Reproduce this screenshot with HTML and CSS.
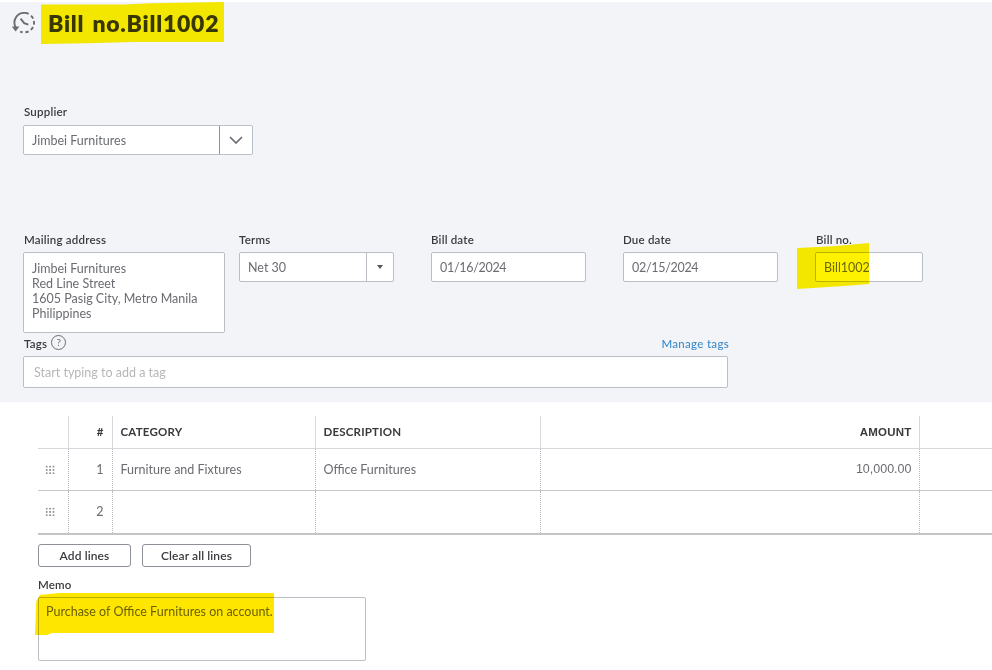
FILE: index.html
```html
<!DOCTYPE html>
<html lang="en">
<head>
    <meta charset="UTF-8">
    <meta name="viewport" content="width=device-width, initial-scale=1.0">
    <title>Bill no.Bill1002</title>
    <link rel="stylesheet" href="styles.css">
</head>
<body>
    <div class="page">
        <div class="panel">
            <div class="title-row">
                <svg class="history-icon" width="26" height="22" viewBox="0 0 26 22" fill="none" stroke="#6b6c72" stroke-width="1.9">
                    <path d="M4.6 15.2A9.7 9.7 0 0 1 13.4 0.9a9.7 9.7 0 0 1 4.3 1"/>
                    <path d="M20 3.6a9.7 9.7 0 0 1 2.1 3M22.9 9a9.7 9.7 0 0 1 0 3.6M22 15a9.7 9.7 0 0 1-2.2 2.9M17.6 19.3a9.7 9.7 0 0 1-3.2 1M11.6 20.3a9.7 9.7 0 0 1-2.4-.6"/>
                    <path d="M9.6 6.6l3.6 4.6 4.2 1.5"/>
                    <path d="M0.8 14.4h7.6l-3.8 5z" fill="#6b6c72" stroke="none"/>
                </svg>
                <h1>Bill no.Bill1002</h1>
            </div>

            <div class="field supplier">
                <label>Supplier</label>
                <div class="select">
                    <span class="value">Jimbei Furnitures</span>
                    <span class="select-btn">
                        <svg width="14" height="8" viewBox="0 0 14 8" fill="none" stroke="#6b6c72" stroke-width="1.7"><path d="M1 1l6 6 6-6"/></svg>
                    </span>
                </div>
            </div>

            <div class="details">
                <div class="field address">
                    <label>Mailing address</label>
                    <div class="box textarea">Jimbei Furnitures<br>Red Line Street<br>1605 Pasig City, Metro Manila<br>Philippines</div>
                </div>
                <div class="field terms">
                    <label>Terms</label>
                    <div class="select">
                        <span class="value">Net 30</span>
                        <span class="select-btn small"><i class="caret"></i></span>
                    </div>
                </div>
                <div class="field date">
                    <label>Bill date</label>
                    <div class="box input digits">01/16/2024</div>
                </div>
                <div class="field date">
                    <label>Due date</label>
                    <div class="box input digits">02/15/2024</div>
                </div>
                <div class="field bill-no">
                    <label>Bill no.</label>
                    <div class="box input">Bill1002</div>
                </div>
            </div>

            <div class="tags">
                <div class="tags-head">
                    <label>Tags</label>
                    <span class="help">?</span>
                    <a class="manage" href="#">Manage tags</a>
                </div>
                <div class="box tag-input">Start typing to add a tag</div>
            </div>
        </div>

        <div class="lines">
            <table>
                <colgroup>
                    <col class="c-drag"><col class="c-num"><col class="c-cat"><col class="c-desc"><col class="c-amt"><col>
                </colgroup>
                <thead>
                    <tr>
                        <th></th>
                        <th class="right">#</th>
                        <th>CATEGORY</th>
                        <th>DESCRIPTION</th>
                        <th class="right amount-head">AMOUNT</th>
                        <th></th>
                    </tr>
                </thead>
                <tbody>
                    <tr>
                        <td><span class="grip"></span></td>
                        <td class="right">1</td>
                        <td>Furniture and Fixtures</td>
                        <td>Office Furnitures</td>
                        <td class="right amount">10,000.00</td>
                        <td></td>
                    </tr>
                    <tr>
                        <td><span class="grip"></span></td>
                        <td class="right">2</td>
                        <td></td>
                        <td></td>
                        <td></td>
                        <td></td>
                    </tr>
                </tbody>
            </table>

            <div class="buttons">
                <button class="add">Add lines</button>
                <button class="clear">Clear all lines</button>
            </div>

            <label class="memo-label">Memo</label>
            <div class="box memo">Purchase of Office Furnitures on account.</div>
        </div>

        <!-- marker strokes drawn over the screenshot -->
        <div class="mark mark-title"></div>
        <div class="mark mark-bill"></div>
        <div class="mark mark-memo"></div>
    </div>
</body>
</html>
```

FILE: styles.css
```css
* {
    box-sizing: border-box;
}
html, body {
    margin: 0;
    background-color: #fff;
}
body {
    font-family: "Lato", Arial, sans-serif;
    font-size: 12.5px;
    color: #393a3d;
}
.page {
    position: relative;
    width: 992px;
    height: 670px;
    overflow: hidden;
    padding-top: 2px;
}
.panel {
    height: 400px;
    background-color: #f3f4f8;
    padding: 0 23px;
}
.title-row {
    display: flex;
    align-items: center;
    height: 41px;
    margin-left: -12px;
}
.history-icon {
    flex: none;
    margin: 0 11px 0 0;
}
h1 {
    margin: 0;
    font-size: 23px;
    font-weight: 800;
    letter-spacing: 0.75px;
    word-spacing: 2px;
    color: #393a3d;
}
label {
    display: block;
    font-size: 11.5px;
    font-weight: 600;
    letter-spacing: 0.2px;
    line-height: 14px;
    color: #393a3d;
}
.field label {
    margin-bottom: 5px;
}
.box, .select {
    background-color: #fff;
    border: 1px solid #babec5;
    border-radius: 2px;
    color: #6b6c72;
}
.supplier {
    margin-top: 62px;
    width: 230px;
}
.supplier label {
    margin-bottom: 6px;
    padding-left: 1px;
}
.select {
    display: flex;
    align-items: center;
    height: 30px;
}
.select .value {
    flex: 1;
    padding: 1px 0 0 8px;
}
.select-btn {
    display: flex;
    align-items: center;
    justify-content: center;
    width: 33px;
    height: 100%;
    border-left: 1px solid #8d9096;
}
.select-btn.small {
    width: 27px;
    border-left-color: #babec5;
}
.caret {
    width: 0;
    height: 0;
    border: 3.5px solid transparent;
    border-top: 4px solid #55565a;
    border-bottom: 0;
}
.details {
    display: flex;
    margin-top: 78px;
}
.address {
    width: 202px;
    margin-right: 14px;
}
.address label, .bill-no label {
    padding-left: 1px;
}
.textarea {
    height: 81px;
    padding: 8px 8px;
    line-height: 15px;
}
.terms {
    width: 155px;
    margin-right: 37px;
}
.date {
    width: 155px;
    margin-right: 37px;
}
.bill-no {
    width: 108px;
}
.input {
    height: 30px;
    line-height: 30px;
    padding-left: 8px;
}
.digits {
    letter-spacing: -0.3px;
}
.tags {
    width: 706px;
}
.tags-head {
    display: flex;
    align-items: center;
    height: 20px;
    margin-bottom: 3px;
}
.tags-head label {
    margin: 2px 4px 0 0;
    padding-left: 1px;
}
.help {
    width: 15px;
    height: 15px;
    margin-top: -2px;
    border: 1px solid #6b6c72;
    border-radius: 50%;
    font-size: 10px;
    line-height: 13px;
    text-align: center;
    color: #6b6c72;
}
.manage {
    margin-left: auto;
    font-size: 11.5px;
    font-weight: 500;
    letter-spacing: 0.3px;
    color: #3d8bc9;
    text-decoration: none;
}
.tag-input {
    width: 705px;
    height: 32px;
    line-height: 31px;
    padding-left: 10px;
    color: #b6b7ba;
}
.lines {
    padding: 14px 0 0 38px;
}
table {
    width: 954px;
    table-layout: fixed;
    border-collapse: collapse;
}
.c-drag { width: 30px; }
.c-num { width: 44px; }
.c-cat { width: 203px; }
.c-desc { width: 225px; }
.c-amt { width: 379px; }
th {
    height: 32px;
    padding: 0 8px;
    font-size: 11.5px;
    font-weight: 700;
    text-align: left;
    letter-spacing: 0.2px;
    color: #393a3d;
    border-left: 1px solid #d4d7dc;
    border-bottom: 1px solid #d4d7dc;
}
td {
    height: 42px;
    padding: 0 8px;
    color: #6b6c72;
    border-left: 1px dotted #b5b7bb;
    border-bottom: 1px solid #c8cacd;
}
tbody tr:last-child td {
    height: 44px;
    border-bottom: 2px solid #c4c4c4;
}
th:first-child, td:first-child {
    border-left: 0;
}
.right {
    text-align: right;
}
.amount, .amount-head {
    padding-right: 7px;
    font-family: "Liberation Sans", Arial, sans-serif;
    font-size: 12.5px;
}
.amount-head {
    font-size: 11.5px;
}
.grip {
    display: block;
    width: 10px;
    height: 9px;
    margin-left: -1px;
    background-image: radial-gradient(#8d9096 0.8px, transparent 0.9px);
    background-size: 3.4px 3.3px;
}
.buttons {
    display: flex;
    gap: 11px;
    margin-top: 9px;
}
button {
    height: 23px;
    padding: 0;
    background-color: #fff;
    border: 1px solid #8d9096;
    border-radius: 3px;
    font-family: inherit;
    font-size: 12px;
    font-weight: 600;
    letter-spacing: 0.1px;
    color: #393a3d;
}
.add {
    width: 93px;
}
.clear {
    width: 109px;
}
.memo-label {
    margin-top: 11px;
    margin-bottom: 5px;
}
.memo {
    width: 328px;
    height: 64px;
    padding: 6px 7px;
    line-height: 16px;
}
.mark {
    position: absolute;
    mix-blend-mode: multiply;
}
.mark-title {
    left: 41px;
    top: 2px;
    width: 183px;
    height: 42px;
    background-color: #fff200;
    clip-path: polygon(0 6%, 45% 6%, 60% 3%, 100% 0, 100% 95%, 50% 95%, 25% 98%, 0 100%);
}
.mark-bill {
    left: 797px;
    top: 243px;
    width: 72px;
    height: 46px;
    background-color: #fff200;
    clip-path: polygon(0 11%, 50% 7%, 100% 0, 100% 89%, 60% 94%, 0 100%);
}
.mark-memo {
    left: 35px;
    top: 593px;
    width: 239px;
    height: 42px;
    background-color: #ffe600;
    clip-path: polygon(2% 5%, 10% 0, 100% 0, 100% 95%, 7% 95%, 5% 100%, 0 100%, 0.5% 20%);
}
```
